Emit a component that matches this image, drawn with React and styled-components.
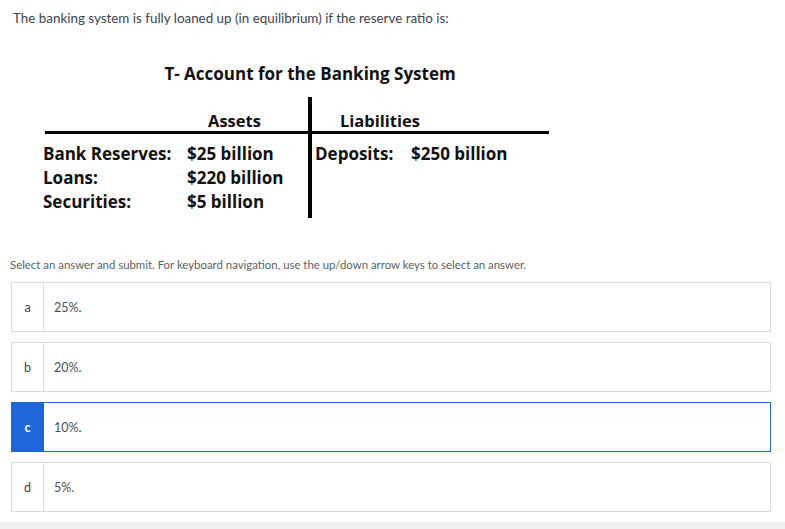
import React from "react";
import styled, { createGlobalStyle } from "styled-components";

const GlobalStyle = createGlobalStyle`
  html, body { margin: 0; padding: 0; background: #fff; }
  body { font-family: "Lato", "Liberation Sans", sans-serif; }
`;

const Page = styled.div`
  min-height: 529px;
  display: flex;
  flex-direction: column;
`;

const Content = styled.div`
  flex: 1;
  padding: 9px 14px 10px 11px;
`;

const Question = styled.p`
  margin: 0 0 0 2px;
  font-size: 13.4px;
  line-height: 18px;
  color: #3b4350;
`;

const TAccount = styled.div`
  margin: 35px 0 0 32px;
  font-family: "Open Sans", "Liberation Sans", sans-serif;
  font-weight: 700;
  color: #111;
`;

const Title = styled.div`
  width: 534px;
  text-align: center;
  font-size: 17px;
  line-height: 24px;
`;

const Frame = styled.div`
  margin-top: 11px;
  display: grid;
  grid-template-columns: 265px 4px 237px;
  grid-template-rows: 34px 3px auto;
`;

const Head = styled.div`
  grid-row: 1;
  grid-column: ${(p) => p.$col};
  padding-left: ${(p) => p.$pad}px;
  display: flex;
  align-items: flex-end;
  font-size: 16.5px;
  line-height: 20px;
`;

const HLine = styled.div`
  grid-row: 2;
  grid-column: 1 / -1;
  background: #000;
  margin-left: 2px;
`;

const VLine = styled.div`
  grid-row: 1 / -1;
  grid-column: 2;
  background: #000;
`;

const Entries = styled.div`
  grid-row: 3;
  grid-column: ${(p) => p.$col};
  display: grid;
  grid-template-columns: ${(p) => p.$label}px auto;
  grid-auto-rows: 24px;
  align-content: start;
  padding: 8px 0 4px ${(p) => p.$pad}px;
  font-size: 17px;
  line-height: 24px;
  white-space: nowrap;
`;

const Instruction = styled.p`
  margin: 39px 0 0 -1px;
  font-size: 11.4px;
  line-height: 16px;
  color: #5a5f66;
`;

const Options = styled.div`
  margin-top: 9px;
  display: flex;
  flex-direction: column;
  gap: 10px;
`;

const Option = styled.div`
  height: 50px;
  box-sizing: border-box;
  display: flex;
  border: 1px solid ${(p) => (p.$selected ? "#1f66d8" : "#dcdcdc")};
  background: #fff;
`;

const Letter = styled.div`
  width: 31px;
  flex: none;
  display: flex;
  align-items: center;
  justify-content: center;
  border-right: 1px solid ${(p) => (p.$selected ? "#1f66d8" : "#dcdcdc")};
  background: ${(p) => (p.$selected ? "#1f66d8" : "transparent")};
  color: ${(p) => (p.$selected ? "#fff" : "#3b4350")};
  font-weight: ${(p) => (p.$selected ? 700 : 400)};
  font-size: 12.5px;
`;

const OptionText = styled.div`
  display: flex;
  align-items: center;
  padding-left: 10px;
  font-size: 12.5px;
  color: #4a515c;
`;

const Footer = styled.div`
  height: 7px;
  background: #f0f0f0;
`;

const answers = [
  { key: "a", text: "25%." },
  { key: "b", text: "20%." },
  { key: "c", text: "10%.", selected: true },
  { key: "d", text: "5%." },
];

export default function App() {
  return (
    <>
      <GlobalStyle />
      <Page>
        <Content>
          <Question>
            The banking system is fully loaned up (in equilibrium) if the reserve ratio is:
          </Question>
          <TAccount>
            <Title>T- Account for the Banking System</Title>
            <Frame>
              <Head $col={1} $pad={165}>Assets</Head>
              <Head $col={3} $pad={28}>Liabilities</Head>
              <HLine />
              <VLine />
              <Entries $col={1} $label={144} $pad={0}>
                <span>Bank Reserves:</span>
                <span>$25 billion</span>
                <span>Loans:</span>
                <span>$220 billion</span>
                <span>Securities:</span>
                <span>$5 billion</span>
              </Entries>
              <Entries $col={3} $label={96} $pad={3}>
                <span>Deposits:</span>
                <span>$250 billion</span>
              </Entries>
            </Frame>
          </TAccount>
          <Instruction>
            Select an answer and submit. For keyboard navigation, use the up/down arrow keys to select an answer.
          </Instruction>
          <Options>
            {answers.map((a) => (
              <Option key={a.key} $selected={a.selected}>
                <Letter $selected={a.selected}>{a.key}</Letter>
                <OptionText>{a.text}</OptionText>
              </Option>
            ))}
          </Options>
        </Content>
        <Footer />
      </Page>
    </>
  );
}
